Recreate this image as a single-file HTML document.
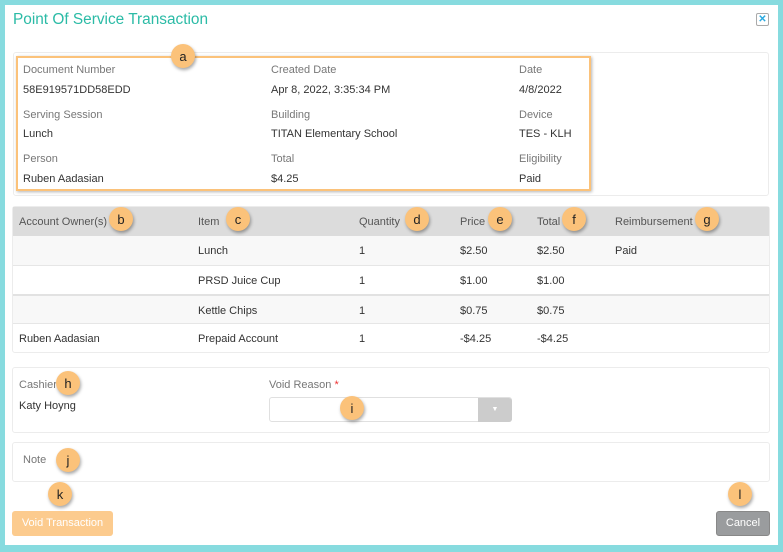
<!DOCTYPE html>
<html><head><style>
*{box-sizing:border-box;margin:0;padding:0}
body{width:783px;height:552px;background:#87dbdf;font-family:"Liberation Sans",sans-serif;position:relative;overflow:hidden;font-size:11px;color:#333}
.win{position:absolute;left:5px;top:5px;width:773px;height:540px;background:#fff}
.a{position:absolute}
h1{position:absolute;left:13px;top:11px;font-size:15.4px;font-weight:normal;color:#2bbba6}
.card{position:absolute;border:1px solid #ececec;border-radius:3px;background:#fff}
.lbl{color:#777}
.b{position:absolute;width:24px;height:24px;border-radius:50%;background:#fbc27a;color:#222;font-size:13px;text-align:center;line-height:25px;box-shadow:1px 2px 3px rgba(0,0,0,.35)}
.row{position:absolute;left:13px;width:756px;height:29px;border-top:1px solid #e6e6e6}
.row span{position:absolute;top:9px}
</style></head><body>
<div class="win"></div>
<h1>Point Of Service Transaction</h1>
<div class="a" style="left:756px;top:13px;width:13px;height:13px;border:1px solid #aaa;border-radius:2px;color:#29a9e0;font-size:10px;line-height:11px;text-align:center;font-weight:bold">✕</div>

<div class="card" style="left:13px;top:52px;width:756px;height:144px"></div>
<div class="a" style="left:16px;top:56px;width:575px;height:135px;border:2px solid #fbc27a;box-shadow:1px 1px 3px rgba(0,0,0,.3)"></div>
<div class="a lbl" style="left:23px;top:64px">Document Number</div>
<div class="a" style="left:23px;top:84px">58E919571DD58EDD</div>
<div class="a lbl" style="left:23px;top:109px">Serving Session</div>
<div class="a" style="left:23px;top:128px">Lunch</div>
<div class="a lbl" style="left:23px;top:153px">Person</div>
<div class="a" style="left:23px;top:173px">Ruben Aadasian</div>
<div class="a lbl" style="left:271px;top:64px">Created Date</div>
<div class="a" style="left:271px;top:84px">Apr 8, 2022, 3:35:34 PM</div>
<div class="a lbl" style="left:271px;top:109px">Building</div>
<div class="a" style="left:271px;top:128px">TITAN Elementary School</div>
<div class="a lbl" style="left:271px;top:153px">Total</div>
<div class="a" style="left:271px;top:173px">$4.25</div>
<div class="a lbl" style="left:519px;top:64px">Date</div>
<div class="a" style="left:519px;top:84px">4/8/2022</div>
<div class="a lbl" style="left:519px;top:109px">Device</div>
<div class="a" style="left:519px;top:128px">TES - KLH</div>
<div class="a lbl" style="left:519px;top:153px">Eligibility</div>
<div class="a" style="left:519px;top:173px">Paid</div>

<div class="card" style="left:12px;top:206px;width:758px;height:147px"></div>
<div class="a" style="left:13px;top:207px;width:756px;height:29px;background:#dcdcdc;color:#555">
<span class="a" style="left:6px;top:9px">Account Owner(s)</span>
<span class="a" style="left:185px;top:9px">Item</span>
<span class="a" style="left:346px;top:9px">Quantity</span>
<span class="a" style="left:447px;top:9px">Price</span>
<span class="a" style="left:524px;top:9px">Total</span>
<span class="a" style="left:602px;top:9px">Reimbursement</span>
</div>
<div class="row" style="top:236px;background:#f8f8f8;border-top:none"><span style="left:185px">Lunch</span><span style="left:346px">1</span><span style="left:447px">$2.50</span><span style="left:524px">$2.50</span><span style="left:602px">Paid</span></div>
<div class="row" style="top:265px"><span style="left:185px">PRSD Juice Cup</span><span style="left:346px">1</span><span style="left:447px">$1.00</span><span style="left:524px">$1.00</span></div>
<div class="row" style="top:294px;background:#f8f8f8;border-top:2px solid #e2e2e2"><span style="left:185px">Kettle Chips</span><span style="left:346px">1</span><span style="left:447px">$0.75</span><span style="left:524px">$0.75</span></div>
<div class="row" style="top:323px"><span style="left:6px">Ruben Aadasian</span><span style="left:185px">Prepaid Account</span><span style="left:346px">1</span><span style="left:447px">-$4.25</span><span style="left:524px">-$4.25</span></div>

<div class="card" style="left:12px;top:367px;width:758px;height:66px"></div>
<div class="a lbl" style="left:19px;top:379px">Cashier</div>
<div class="a" style="left:19px;top:400px">Katy Hoyng</div>
<div class="a lbl" style="left:269px;top:379px">Void Reason <span style="color:#e33">*</span></div>
<div class="a" style="left:269px;top:397px;width:243px;height:25px;border:1px solid #e0e0e0;border-radius:3px"></div>
<div class="a" style="left:478px;top:398px;width:34px;height:24px;background:#ccc;border-radius:0 3px 3px 0;color:#fff;font-size:7px;text-align:center;line-height:24px">▼</div>

<div class="card" style="left:12px;top:442px;width:758px;height:40px"></div>
<div class="a lbl" style="left:23px;top:454px">Note</div>

<div class="a" style="left:12px;top:511px;width:101px;height:25px;background:#fccb8e;border-radius:3px;color:#fff;text-align:center;line-height:25px">Void Transaction</div>
<div class="a" style="left:716px;top:511px;width:54px;height:25px;background:#9a9c9e;border-radius:3px;color:#fff;text-align:center;line-height:23px;border:1px solid #888">Cancel</div>

<div class="b" style="left:171px;top:44px">a</div>
<div class="b" style="left:109px;top:207px">b</div>
<div class="b" style="left:226px;top:207px">c</div>
<div class="b" style="left:405px;top:207px">d</div>
<div class="b" style="left:488px;top:207px">e</div>
<div class="b" style="left:562px;top:207px">f</div>
<div class="b" style="left:695px;top:207px">g</div>
<div class="b" style="left:56px;top:371px">h</div>
<div class="b" style="left:340px;top:396px">i</div>
<div class="b" style="left:56px;top:448px">j</div>
<div class="b" style="left:48px;top:482px">k</div>
<div class="b" style="left:728px;top:482px">l</div>
</body></html>
